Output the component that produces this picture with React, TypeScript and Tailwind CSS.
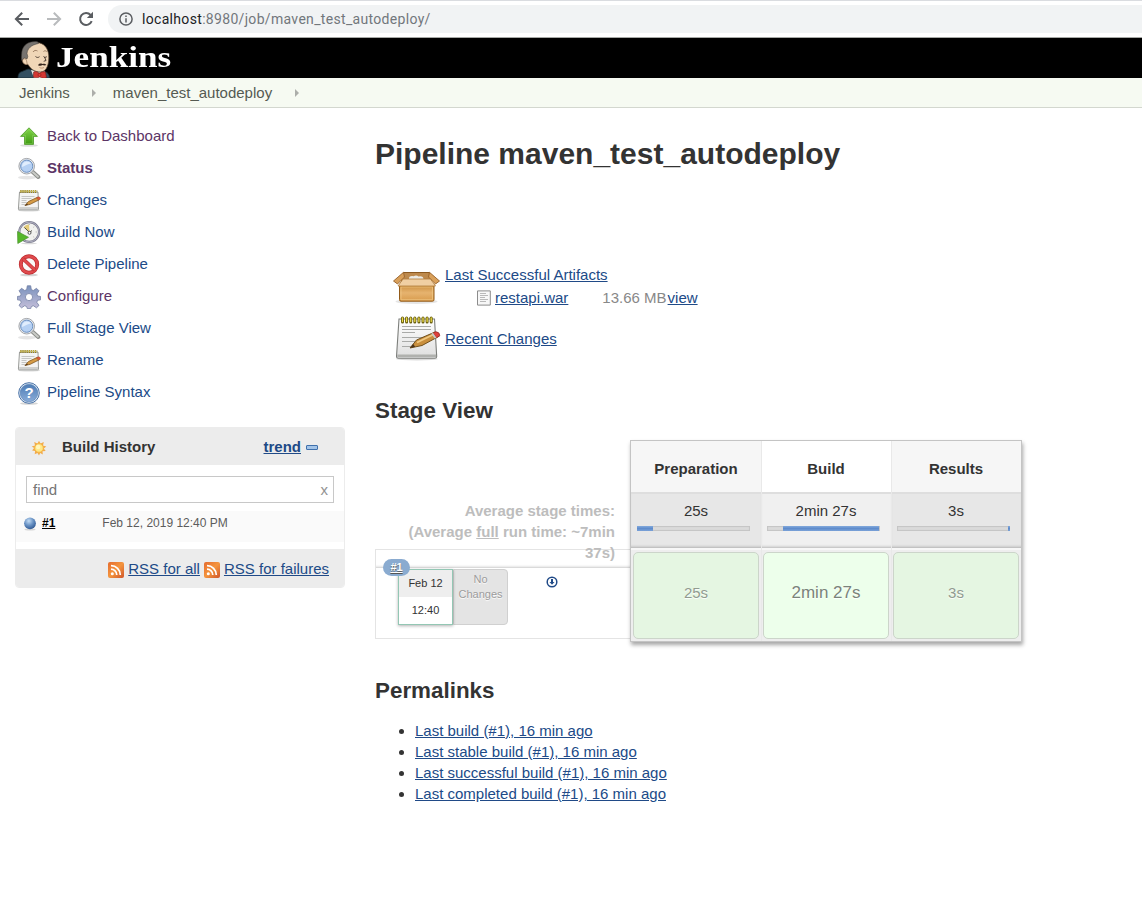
import React from "react";

type IconProps = { className?: string };

function BackArrow({ className = "" }: IconProps) {
  return (
    <svg className={className} width="16" height="16" viewBox="0 0 16 16" fill="none" stroke="currentColor" strokeWidth="2">
      <path d="M15 8H2.5M8.2 1.7 1.9 8l6.3 6.3" />
    </svg>
  );
}

function Reload() {
  return (
    <svg width="16" height="16" viewBox="0 0 16 16" className="text-[#5a5d61]">
      <path d="M13.7 10.2A6 6 0 1 1 12.6 4" fill="none" stroke="currentColor" strokeWidth="2" />
      <path d="M15 .8V7H8.8z" fill="currentColor" />
    </svg>
  );
}

function Info() {
  return (
    <svg width="14" height="14" viewBox="0 0 14 14" fill="none" stroke="#5a5d61" strokeWidth="1.5">
      <circle cx="7" cy="7" r="6.1" />
      <path d="M7 6.2v4.3M7 3.5v1.6" />
    </svg>
  );
}

function Butler() {
  return (
    <svg width="36" height="38" viewBox="0 0 36 38" className="shrink-0">
      <path d="M1 38c0-3 .5-5.500 4-6.500L11 29l16 2.500c3.500.5 5.500 3 5.500 6.500z" fill="#335061" stroke="#182830" strokeWidth=".8" />
      <path d="m14 30 6 1.500h8V38H17z" fill="#e9e9e6" />
      <path d="M8 9C10 4 15 2 20 2.500c7 .5 11 5.500 11.700 12.500.7 8-1.700 17-8.200 17-6 0-10-3-12.500-7.500-3 .5-5-1-5-3.500z" fill="#f0d6b7" stroke="#54402f" strokeWidth=".7" />
      <path d="M20.500 1.700C12 .8 6 4.500 4.800 12c-.3 3-.6 6-.2 8.500L7.500 18l2.500 1 .8-2.500-.8-3C10.500 8.500 14 5 21.500 3.500z" fill="#77736f" stroke="#3a3633" strokeWidth=".5" />
      <path d="M5.500 20c1.200-2 3.500-1.500 4 .5l.8 4c-3 .2-5-1.500-4.800-4.500z" fill="#f0d6b7" stroke="#8c6b50" strokeWidth=".6" />
      <path d="M16 12c1-1.700 3-2 4.500-1M26.500 11.500c1.200-1 2.300-.8 3.300 0" fill="none" stroke="#8c6b50" strokeWidth=".8" />
      <path d="M18.500 16.500c1.200 1.200 3 1.200 4 .2M26.500 16.500c1 1 2.300 1 3.300.2M27.500 17l1.500 3.500-2.300.8" fill="none" stroke="#3b2c22" strokeWidth=".9" />
      <path d="M21 25.200c.8-1.800 2.500-2 4.500-1.300 1.500-.5 3 0 4 1.200-1.300.6-2.600.6-4 0-1.300.9-3 1-4.500.1z" fill="#37261e" />
      <path d="M22.500 27.500c1.300.8 3.200.8 4.500 0" fill="none" stroke="#a8775a" strokeWidth=".7" />
      <path d="M16.700 32c2-1 3.700-.2 5.500 1.200 2-1.300 4-1.700 6.300-1.200l1 5.500c-2.300 1.300-4.800.7-6.700-.7-1.700 1.200-4.200 1.500-6.500.3z" fill="#d33833" stroke="#711b17" strokeWidth=".6" />
      <circle cx="22.500" cy="34.900" r="1.500" fill="#ef3d3a" stroke="#711b17" strokeWidth=".5" />
    </svg>
  );
}

function UpArrow() {
  return (
    <svg width="24" height="24" viewBox="0 0 24 24">
      <defs><linearGradient id="up" x2="0" y2="1"><stop stopColor="#82d64a" /><stop offset="1" stopColor="#3f9a12" /></linearGradient></defs>
      <ellipse cx="12" cy="20.500" rx="9" ry="1.300" fill="#000" opacity=".13" />
      <path d="m12 2.800 8.500 8.600h-4v8h-9v-8h-4z" fill="url(#up)" stroke="#4f9a2a" strokeWidth=".8" />
      <path d="m12 4.300 6 6.200h-2.500v8h-7v-8H6z" fill="none" stroke="#a1e677" strokeWidth=".7" opacity=".5" />
    </svg>
  );
}

function Search() {
  return (
    <svg width="24" height="24" viewBox="0 0 24 24">
      <ellipse cx="10" cy="20.600" rx="9" ry="1.800" fill="#000" opacity=".1" />
      <path d="m15.500 14.700 5.800 5.300" stroke="#8b8e8a" strokeWidth="4" strokeLinecap="round" />
      <path d="m16 15.200 5 4.500" stroke="#c9cbc7" strokeWidth="2" strokeLinecap="round" />
      <circle cx="9.700" cy="9.200" r="7.800" fill="#e9ebee" stroke="#9a9da1" strokeWidth=".9" />
      <circle cx="9.700" cy="9.200" r="6.100" fill="#b5d0f3" stroke="#6d91c1" strokeWidth="1" />
      <path d="M5 10c0-6 7-7 9-3-3-1-5 2-9 3z" fill="#e0edfd" />
    </svg>
  );
}

function NotepadSmall() {
  return (
    <svg width="24" height="24" viewBox="0 0 24 24">
      <ellipse cx="12" cy="21.500" rx="11" ry="1" fill="#000" opacity=".14" />
      <path d="M2.500 3h18.500l.5 17q0 .8-.8.800H2.200q-.8 0-.8-.8z" fill="#f4f4f3" stroke="#90928f" strokeWidth=".9" />
      <path d="M2.200 18h18.800v2.200h-18.800z" fill="#cfd0ce" />
      <path d="M4.500 7.500h13M4.500 9.500h10M4.500 11.500h5M4.500 13.500h7M4.500 15.500h4" stroke="#b9bab8" strokeWidth=".8" />
      <path d="M3.200 2.500h17" stroke="#8a7a2a" strokeWidth="2.800" strokeDasharray="1.400 .7" />
      <path d="M3.400 2.200h16.500" stroke="#e0cd52" strokeWidth="1.500" strokeDasharray="1 1.100" />
      <path d="m8 16.500 3.500-4L20.500 8.300l1.700 2.500-9 4.500z" fill="#d59b45" stroke="#80551f" strokeWidth=".8" />
      <path d="m19.500 8.800 2-1q2.300.5 2 2l-2 1.300z" fill="#df5a3b" stroke="#a3402a" strokeWidth=".5" />
      <path d="m7.700 16.700 2.400-2.200.8 1.300z" fill="#4a331b" />
    </svg>
  );
}

function Notepad() {
  return (
    <svg width="48" height="48" viewBox="0 0 48 48" className="shrink-0">
      <defs>
        <linearGradient id="pad" x2="0" y2="1"><stop stopColor="#fff" /><stop offset="1" stopColor="#dedede" /></linearGradient>
      </defs>
      <ellipse cx="24" cy="45" rx="21" ry="1.500" fill="#000" opacity=".14" />
      <path d="M6 5h35.500L43.700 42.500q0 1.800-1.800 1.800H5.300q-1.800 0-1.800-1.800z" fill="url(#pad)" stroke="#7d7f7c" strokeWidth="1.100" />
      <path d="M4.300 40.500h38.700v2.500H4.300z" fill="#b0b1ae" />
      <path d="M9 12.500h29M9 15.500h29M9 18.500h13M9 23.500h29M9 27.500h16M9 32.500h12" stroke="#a9aaa8" strokeWidth="1.100" />
      <path d="M9.500 4v4m4.100-4v4m4.100-4v4m4.100-4v4m4.100-4v4m4.100-4v4m4.100-4v4m4.100-4v4" stroke="#665b0b" strokeWidth="3" strokeLinecap="round" />
      <path d="M9.500 4v3.500m4.100-3.500v3.500m4.100-3.500v3.500m4.100-3.500v3.500m4.100-3.500v3.500m4.100-3.500v3.500m4.100-3.500v3.500m4.100-3.500v3.500" stroke="#eddc4a" strokeWidth="1.300" strokeLinecap="round" />
      <path d="m17 34 6.500-8L42 18l4 4.300L29 31.500z" fill="#c98f3d" stroke="#71501c" strokeWidth="1" />
      <path d="M24 28.500 41 20.200" stroke="#f0c981" strokeWidth="1.800" />
      <path d="m40 19 2.800-1.300q4 .3 4 4l-3.300 2.100z" fill="#df403b" stroke="#982a25" strokeWidth=".8" />
      <path d="m38.200 19.700 1.800-.9 3.500 4.900-1.800.9z" fill="#c8c9c4" />
      <path d="m17 34 3.200-4 2 2.700z" fill="#4a331b" />
    </svg>
  );
}

function Clock() {
  return (
    <svg width="24" height="24" viewBox="0 0 24 24">
      <ellipse cx="12" cy="22.500" rx="8" ry=".8" opacity=".15" />
      <circle cx="12.200" cy="11" r="9.900" fill="#f2f2ef" stroke="#7b7b8e" strokeWidth="2.200" />
      <circle cx="12.200" cy="11" r="9.900" fill="none" stroke="#b3b3c4" strokeWidth=".9" />
      <path d="m12.500 11.500-6-5Q8.500 3.500 12 3.500z" fill="#e4cb78" />
      <path d="m7.500 6.500 5 5 2.500-2" fill="none" stroke="#55554d" strokeWidth="1" />
      <circle cx="12.500" cy="11.800" r="1.500" fill="#fff" stroke="#444" strokeWidth=".9" />
      <path d="M12.200 3v1m7.500 7h-1m-1.500-5.300-.8.600m.8 10.200-.8-.7" stroke="#aaa" />
      <path d="m.5 10.500 11 5.800L.8 22.500z" fill="#55b729" stroke="#4b922e" strokeWidth=".7" />
    </svg>
  );
}

function NoEntry() {
  return (
    <svg width="24" height="24" viewBox="0 0 24 24">
      <ellipse cx="12" cy="22" rx="9" ry="1.300" opacity=".17" />
      <circle cx="12" cy="11.500" r="8.200" fill="#f9f9f8" stroke="#bb2c2f" strokeWidth="3.900" />
      <circle cx="12" cy="11.500" r="8.200" fill="none" stroke="#e04a4d" strokeWidth="2.600" />
      <path d="m6 5.800 12 11.400" stroke="#bb2c2f" strokeWidth="3.600" />
      <path d="m6 5.800 12 11.400" stroke="#e04a4d" strokeWidth="2.500" />
    </svg>
  );
}

function Gear() {
  return (
    <svg width="24" height="24" viewBox="0 0 24 24">
      <defs><linearGradient id="gear" x2="0" y2="1"><stop stopColor="#7a92bd" /><stop offset="1" stopColor="#c4bed9" /></linearGradient></defs>
      <path fill="url(#gear)" stroke="#7480a4" strokeWidth=".8" fillRule="evenodd" d="M10.300.8h3.400l.6 3.800 2 .9 3.200-2.200 2.500 2.500-2.200 3.200.8 2 3 .5v3.300l-3 .5-.8 2 2.200 3.100-2.500 2.400-3.200-2.100-2 .9-.6 2h-3.400l-.6-2-2-.9-3.200 2.100L2 20.400l2.200-3.100-.8-2-3-.5v-3.300l3-.5.8-2L2 5.800l2.500-2.500 3.200 2.200 2-.9zM12 8.500a3.600 3.600 0 1 0 0 7.200 3.600 3.600 0 0 0 0-7.200z" />
    </svg>
  );
}

function Help() {
  return (
    <svg width="24" height="24" viewBox="0 0 24 24">
      <defs><linearGradient id="help" x2="0" y2="1"><stop stopColor="#4d7cb5" /><stop offset="1" stopColor="#8aacd8" /></linearGradient></defs>
      <ellipse cx="12" cy="22.500" rx="9" ry="1.300" opacity=".16" />
      <circle cx="12" cy="12" r="10.300" fill="#e7eff8" stroke="#4972a7" />
      <circle cx="12" cy="12" r="8.800" fill="url(#help)" stroke="#567fb1" strokeWidth=".6" />
      <text x="12" y="17.200" textAnchor="middle" fill="#fff" fontSize="15" fontWeight="bold" fontFamily="Liberation Sans, sans-serif">?</text>
    </svg>
  );
}

function Package() {
  return (
    <svg width="48" height="48" viewBox="0 0 48 48" className="shrink-0">
      <defs><linearGradient id="box" x2="0" y2="1"><stop stopColor="#c98c3c" /><stop offset=".5" stopColor="#e6b36f" /><stop offset="1" stopColor="#d89b4c" /></linearGradient></defs>
      <ellipse cx="24.500" cy="36.500" rx="21" ry="2.500" opacity=".1" />
      <path d="M11.500 7.500h26l2 5v6h-30v-6z" fill="#bd894c" stroke="#8b5920" />
      <path d="M17 14.500q-.5-4 4.500-3.300 3-1.500 5 .3 5-1 5 3z" fill="#ecebe5" />
      <path d="M11.500 7.300 1.500 16l4 3 7-7zM37.500 7.300 47.500 16l-4 3-7-7z" fill="#d9a05a" stroke="#96612a" strokeWidth=".9" />
      <path d="M7.500 19.500H42v15.200q0 1.500-1.500 1.500H9Q7.500 36.200 7.500 34.700z" fill="url(#box)" stroke="#925a18" strokeWidth="1" />
      <path d="M9 22h31.500v12.700H9z" fill="none" stroke="#f1c987" strokeWidth=".7" />
      <path d="M11 14h27.500l5 7H6z" fill="#f0cfa3" stroke="#b07b3a" strokeWidth=".8" />
    </svg>
  );
}

function Sun() {
  return (
    <svg width="16" height="16" viewBox="0 0 16 16">
      <path d="m8 .7 1.500 2.900 3.300-1.500-.8 3.300 3.300 1-2.500 2 1.900 2.600-3.200.3.300 3.300-2.600-1.500L8 15.500l-1.500-2.600-2.800 1.300.4-3.200-3-.4 2-2.500L.7 6.500 4 5.400l-.8-3.300 3.300 1.500z" fill="#f2ab4b" />
      <circle cx="8" cy="8" r="4.300" fill="#ffe98a" stroke="#f6b947" />
      <circle cx="7.200" cy="7" r="2.200" fill="#fff6bd" />
    </svg>
  );
}

function Ball() {
  return (
    <svg width="14" height="14" viewBox="0 0 14 14">
      <defs><radialGradient id="ball" cx=".4" cy=".3" r=".75"><stop stopColor="#c4ddf5" /><stop offset=".5" stopColor="#6a93c5" /><stop offset="1" stopColor="#2c5590" /></radialGradient></defs>
      <ellipse cx="7" cy="12.600" rx="5.500" ry="1" opacity=".14" />
      <circle cx="7" cy="6.300" r="5.900" fill="url(#ball)" />
    </svg>
  );
}

function Rss({ id }: { id: string }) {
  return (
    <svg width="16" height="16" viewBox="0 0 16 16" className="mt-0.5 shrink-0">
      <defs><linearGradient id={id} x2="1" y2="1"><stop stopColor="#e56b2e" /><stop offset=".5" stopColor="#f4953e" /><stop offset="1" stopColor="#cf552a" /></linearGradient></defs>
      <rect width="16" height="16" rx="2" fill={`url(#${id})`} />
      <circle cx="4.300" cy="11.700" r="1.500" fill="#fff" />
      <path d="M3 7.200a5.800 5.800 0 0 1 5.800 5.800M3 3.700a9.300 9.300 0 0 1 9.300 9.300" fill="none" stroke="#fff" strokeWidth="1.700" />
    </svg>
  );
}

function Doc() {
  return (
    <svg width="16" height="16" viewBox="0 0 16 16" className="shrink-0">
      <path d="M1.500.9h12.800v14.200H1.500z" fill="#f7f7f7" stroke="#8c8c8c" />
      <path d="M4 3.500h6M4 5.500h8M4 7.500h5M4 9.500h8M4 11.500h6" stroke="#b1b1b1" strokeWidth=".9" />
    </svg>
  );
}

function Crumb() {
  return <svg width="4" height="8" viewBox="0 0 4 8"><path d="m0 0 4 4-4 4z" fill="#acaeaa" /></svg>;
}

const nav = [
  { label: "Back to Dashboard", icon: <UpArrow />, style: "text-[#5c3566]" },
  { label: "Status", icon: <Search />, style: "font-bold text-[#5c3566]" },
  { label: "Changes", icon: <NotepadSmall />, style: "text-[#204a87]" },
  { label: "Build Now", icon: <Clock />, style: "text-[#204a87]" },
  { label: "Delete Pipeline", icon: <NoEntry />, style: "text-[#204a87]" },
  { label: "Configure", icon: <Gear />, style: "text-[#5c3566]" },
  { label: "Full Stage View", icon: <Search />, style: "text-[#204a87]" },
  { label: "Rename", icon: <NotepadSmall />, style: "text-[#204a87]" },
  { label: "Pipeline Syntax", icon: <Help />, style: "text-[#204a87]" },
];

const link = "text-[#204a87] underline";

function BuildHistory() {
  return (
    <section className="ml-[15px] mt-5 h-[161px] w-[330px] overflow-hidden rounded-[4px] border border-[#ececec] bg-white">
      <header className="flex h-[37px] items-center bg-[#ececec] pl-[15px] pr-[26px]">
        <span className="pt-0.5"><Sun /></span>
        <b className="ml-[15px]">Build History</b>
        <a className={`ml-auto font-bold ${link}`}>trend</a>
        <span className="ml-[5px] mt-0.5 h-[5px] w-3 rounded-[1px] border border-[#3f70ac] bg-[#a3c4e8]" />
      </header>
      <div className="mx-2.5 mt-[11px] flex h-[27px] w-[308px] items-center justify-between border border-[#c8c8c8] px-1.5 text-[#757575]">
        <span>find</span>
        <span className="-mr-px text-[15px] text-[#929292]">x</span>
      </div>
      <div className="mt-2 flex h-[31px] items-start bg-[#fafafa] pl-[7px] pt-[5px] text-xs leading-[14px]">
        <span className="pt-px"><Ball /></span>
        <b className="ml-[5px] text-black underline">#1</b>
        <span className="ml-[47px] text-[#5c5c5c]">Feb 12, 2019 12:40 PM</span>
      </div>
      <footer className="mt-[7px] flex h-[39px] items-center justify-end gap-1 bg-[#ececec] pr-[15px]">
        <Rss id="r1" />
        <a className={link}>RSS for all</a>
        <Rss id="r2" />
        <a className={link}>RSS for failures</a>
      </footer>
    </section>
  );
}

const stages = [
  { name: "Preparation", time: "25s", offset: 0, width: 16, active: false },
  { name: "Build", time: "2min 27s", offset: 16, width: 96, active: true },
  { name: "Results", time: "3s", offset: 111, width: 2, active: false },
];

function StageTable() {
  return (
    <div className="flex h-[202px] w-[392px] border border-[#c4c4c4] bg-[#eeeeee] shadow-[1px_3px_4px_rgba(0,0,0,0.35)]">
      {stages.map((s, i) => (
        <div key={s.name} className={`w-[130px] shrink-0 ${i ? "border-l border-[#e9e9e9]" : ""}`}>
          <div className={`flex h-[53px] items-center justify-center border-b-2 border-[#dedede] pt-[3px] text-[15px] font-bold ${i ? "pr-px" : ""} ${s.active ? "bg-white" : "bg-[#f6f6f6]"}`}>{s.name}</div>
          <div className={`h-[54px] pt-2 text-center text-[15px] leading-[18px] shadow-[inset_0_-3px_3px_-2px_rgba(0,0,0,0.25)] ${s.active ? "bg-[#f0f0f0]" : "bg-[#e7e7e7]"}`}>
            <div className={i ? "pr-px" : ""}>{s.time}</div>
            <div className={`${i ? "ml-[5px]" : "ml-1.5"} mt-[6px] h-[5px] w-[113px] bg-[#dadada] shadow-[inset_0_0_1px_1px_rgba(0,0,0,0.1)]`}>
              <div className="h-[5px] bg-linear-to-b from-[#83a9dc] via-[#5f8ccc] to-[#7ba2d8]" style={{ marginLeft: s.offset, width: s.width }} />
            </div>
          </div>
          <div className={`h-[93px] border-t-2 border-[#f7f7f7] pt-0.5 ${i ? "pl-px" : "pl-0.5"}`}>
            <div className={`flex h-[87px] w-[126px] items-center justify-center rounded-[5px] border border-[#ccd5ca] pb-1.5 [text-shadow:0_1px_1px_white] ${s.active ? "bg-[#edffeb] text-[17px] text-[#7a837a]" : "bg-[#e5f6e2] text-[15px] text-[#919b90]"}`}>{s.time}</div>
          </div>
        </div>
      ))}
    </div>
  );
}

function StageView() {
  return (
    <div className="flex h-[203px]">
      <div className="w-[255px] pt-[60px]">
        <div className="relative h-[49px] pl-5 pr-[15px] text-right font-bold leading-[21px] text-[#bdbdbd]">
          Average stage times:<br />(Average <span className="underline">full</span> run time: ~7min 37s)
        </div>
        <div className="h-[90px] border border-r-0 border-[#e4e4e4]">
          <div className="h-[18px] border-b border-[#dadada] shadow-[inset_0_-3px_3px_-3px_rgba(0,0,0,0.2)]" />
          <div className="relative flex pl-[22px] pt-px">
            <div className="absolute -top-[9px] left-[7px] z-20 flex h-[17px] w-[27px] items-center justify-center rounded-full bg-[#8aabd0] text-[11px] font-bold text-white underline [text-shadow:0_1px_1px_#555]">#1</div>
            <div className="relative z-10 h-[56px] w-[55px] border border-[#93c7b4] text-center text-[11px] shadow-[0_1px_3px_rgba(0,0,0,0.3)]">
              <div className="h-[27px] bg-[#eeeeee] leading-[27px]">Feb 12</div>
              <div className="h-[27px] bg-white leading-[27px]">12:40</div>
            </div>
            <div className="h-14 w-[55px] rounded-r-[4px] border border-[#d0d0d0] bg-[#e4e4e4] pt-0.5 text-center text-[11px] leading-[15px] text-[#9c9c9c] [text-shadow:0_1px_1px_white]">No<br />Changes</div>
            <svg width="12" height="12" viewBox="0 0 12 12" className="ml-[38px] mt-[7px]">
              <circle cx="6" cy="6" r="4.800" fill="none" stroke="#204a87" strokeWidth="1.500" />
              <path d="M5 3h2v3h1.500L6 8.800 3.500 6H5z" fill="#204a87" />
            </svg>
          </div>
        </div>
      </div>
      <StageTable />
    </div>
  );
}

const permalinks = [
  "Last build (#1), 16 min ago",
  "Last stable build (#1), 16 min ago",
  "Last successful build (#1), 16 min ago",
  "Last completed build (#1), 16 min ago",
];

export default function App() {
  return (
    <div className="h-[906px] w-[1142px] overflow-hidden bg-white font-['Liberation_Sans',Arial,sans-serif] text-[15px] leading-[21px] text-[#333]">
      <div className="flex h-[38px] items-center border-b border-t border-b-[#a7a9a6] border-t-[#dadce0] bg-white pl-3.5">
        <BackArrow className="text-[#5a5d61]" />
        <BackArrow className="ml-4 rotate-180 text-[#b9bbbd]" />
        <span className="ml-4"><Reload /></span>
        <div className="ml-3.5 flex h-7 flex-1 items-center gap-2.5 rounded-l-full bg-[#f1f3f4] pl-[11px] font-[Roboto,sans-serif] text-[14px] tracking-[0.32px] text-[#72777c]">
          <Info />
          <span className="-ml-px"><span className="text-[#202124]">localhost</span>:8980/job/maven_test_autodeploy/</span>
        </div>
      </div>
      <div className="flex h-10 items-end overflow-hidden bg-black pl-[17px]">
        <Butler />
        <span className="mb-[3px] ml-[3px] origin-left scale-x-[1.17] font-['Liberation_Serif',serif] text-[30px] font-bold leading-9 text-white">Jenkins</span>
      </div>
      <div className="flex h-[30px] items-center border-b border-[#d3d7cf] bg-[#f6faf2] pl-[19px] text-[#555a52]">
        <span>Jenkins</span>
        <span className="ml-[22px] mr-[17px]"><Crumb /></span>
        <span>maven_test_autodeploy</span>
        <span className="ml-[23px]"><Crumb /></span>
      </div>
      <div className="flex">
        <aside className="w-[375px] pt-[11px]">
          <nav>
            {nav.map((n) => (
              <a key={n.label} className={`flex h-8 items-center pl-[17px] ${n.style}`}>
                <span className="pt-1">{n.icon}</span>
                <span className="ml-1.5">{n.label}</span>
              </a>
            ))}
          </nav>
          <BuildHistory />
        </aside>
        <main>
          <h1 className="mt-7 text-[30px] font-bold leading-9">Pipeline maven_test_autodeploy</h1>
          <div className="mt-[89px] flex h-[53px] pl-[17px]">
            <span className="pt-1"><Package /></span>
            <div className="ml-[5px] pt-[3px]">
              <a className={link}>Last Successful Artifacts</a>
              <div className="mt-0.5 flex items-center pl-[31px]">
                <Doc />
                <a className={`ml-[3px] ${link}`}>restapi.war</a>
                <span className="ml-[34px] text-[#888]">13.66 MB</span>
                <a className={`ml-px ${link}`}>view</a>
              </div>
            </div>
          </div>
          <div className="flex h-12 items-center pl-[18px]">
            <Notepad />
            <a className={`ml-1 ${link}`}>Recent Changes</a>
          </div>
          <h2 className="mb-[15px] mt-[35px] text-[22.4px] font-bold leading-[28px]">Stage View</h2>
          <StageView />
          <h2 className="mt-[34px] text-[22.4px] font-bold leading-[28px]">Permalinks</h2>
          <ul className="mt-[15px] list-disc pl-10">
            {permalinks.map((p) => <li key={p}><a className={link}>{p}</a></li>)}
          </ul>
        </main>
      </div>
    </div>
  );
}
